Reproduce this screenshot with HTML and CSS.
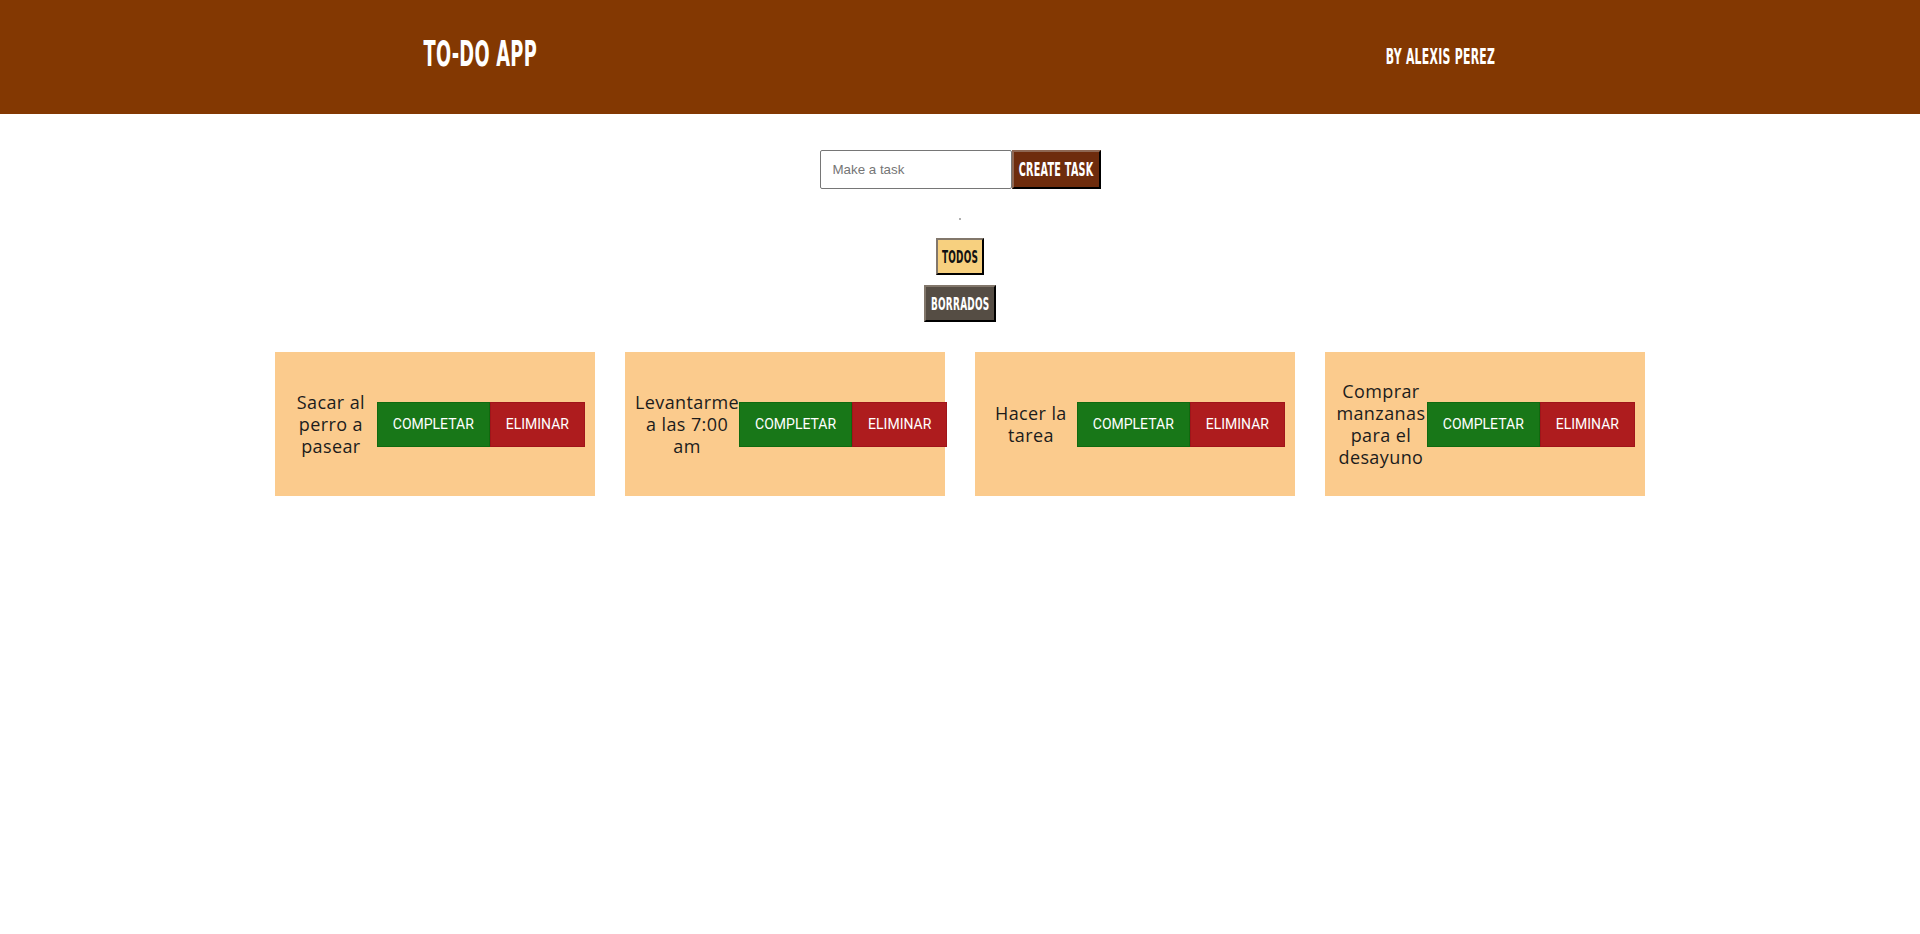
FILE: index.html
```html
<!DOCTYPE html>
<html lang="es">
<head>
<meta charset="utf-8">
<title>To-Do App</title>
<link rel="stylesheet" href="styles.css">
</head>
<body>
<header class="topbar">
  <h1 class="brand"><span class="squeeze">TO-DO APP</span></h1>
  <p class="author"><span class="squeeze">BY ALEXIS PEREZ</span></p>
</header>
<main class="content">
  <form class="task-form">
    <input class="task-input" type="text" placeholder="Make a task">
    <button class="create-btn" type="button"><span class="squeeze">CREATE TASK</span></button>
  </form>
  <div class="dot"></div>
  <div class="filters">
    <button class="filter-btn filter-all" type="button"><span class="squeeze">TODOS</span></button>
    <button class="filter-btn filter-deleted" type="button"><span class="squeeze">BORRADOS</span></button>
  </div>
  <section class="cards">
    <div class="card">
      <p class="task-text">Sacar al perro a pasear</p>
      <button class="act act-done" type="button">COMPLETAR</button>
      <button class="act act-del" type="button">ELIMINAR</button>
    </div>
    <div class="card">
      <p class="task-text">Levantarme a las 7:00 am</p>
      <button class="act act-done" type="button">COMPLETAR</button>
      <button class="act act-del" type="button">ELIMINAR</button>
    </div>
    <div class="card">
      <p class="task-text">Hacer la tarea</p>
      <button class="act act-done" type="button">COMPLETAR</button>
      <button class="act act-del" type="button">ELIMINAR</button>
    </div>
    <div class="card">
      <p class="task-text">Comprar manzanas para el desayuno</p>
      <button class="act act-done" type="button">COMPLETAR</button>
      <button class="act act-del" type="button">ELIMINAR</button>
    </div>
  </section>
</main>
</body>
</html>
```

FILE: styles.css
```css
* { box-sizing: border-box; }
body {
  margin: 0;
  background: #ffffff;
  font-family: "Liberation Sans", Arial, sans-serif;
}
.squeeze {
  display: inline-block;
  font-family: "DejaVu Sans Condensed", "DejaVu Sans", sans-serif;
  font-weight: 700;
  transform: scaleX(0.55);
  transform-origin: center;
  white-space: nowrap;
  letter-spacing: 0.5px;
}
.topbar {
  height: 114px;
  background: #833802;
  display: flex;
  justify-content: space-around;
  align-items: center;
  color: #ffffff;
}
.brand {
  width: 200px;
  display: flex;
  justify-content: center;
  margin: 0 0 6px;
  font-size: 36px;
  font-weight: 700;
  line-height: 1;
}
.author {
  width: 200px;
  display: flex;
  justify-content: center;
  margin: 0;
  font-size: 22px;
  line-height: 1;
}
.content {
  padding-top: 36px;
}
.task-form {
  display: flex;
  justify-content: center;
  align-items: center;
}
.task-input {
  width: 192px;
  height: 39px;
  margin: 0;
  border: 1px solid #767676;
  border-radius: 2px;
  padding: 0 12px;
  font-family: "Liberation Sans", Arial, sans-serif;
  font-size: 13.33px;
  color: #222;
}
.task-input::placeholder { color: #757575; }
.create-btn {
  width: 89px;
  height: 39px;
  margin: 0;
  padding: 0;
  display: flex;
  justify-content: center;
  align-items: center;
  overflow: visible;
  background: #6e2c0d;
  color: #ffffff;
  border: 2px outset #3a2a22;
  font-size: 19.5px;
  line-height: 1;
}
.dot {
  width: 2px;
  height: 2px;
  background: #b0b0b0;
  margin: 29px auto 0;
}
.filters {
  margin-top: 18px;
  display: flex;
  flex-direction: column;
  align-items: center;
  gap: 10px;
}
.filter-btn {
  height: 37px;
  padding: 0;
  margin: 0;
  display: flex;
  justify-content: center;
  align-items: center;
  overflow: visible;
  border: 2px outset #2e2a26;
  font-size: 18px;
  line-height: 1;
}
.filter-all {
  width: 48px;
  background: #f7d07f;
  color: #111111;
}
.filter-deleted {
  width: 72px;
  background: #554d44;
  color: #ffffff;
}
.cards {
  margin-top: 30px;
  display: flex;
  justify-content: center;
  gap: 30px;
}
.card {
  width: 320px;
  height: 144px;
  padding: 0 10px;
  background: #fbcb8d;
  display: flex;
  align-items: center;
}
.task-text {
  flex: 1 1 0;
  margin: 0;
  text-align: center;
  font-family: "Open Sans", sans-serif;
  font-size: 18px;
  line-height: 22px;
  letter-spacing: 0.4px;
  color: #1c1c1c;
}
.act {
  flex: none;
  height: 45px;
  margin: 0;
  padding: 0 15px;
  color: #ffffff;
  font-family: Roboto, "Liberation Sans", sans-serif;
  font-size: 14px;
}
.act-done {
  background: #187718;
  border: 1px solid #0f6a0f;
}
.act-del {
  background: #ae1c1e;
  border: 1px solid #a0141a;
}
```
